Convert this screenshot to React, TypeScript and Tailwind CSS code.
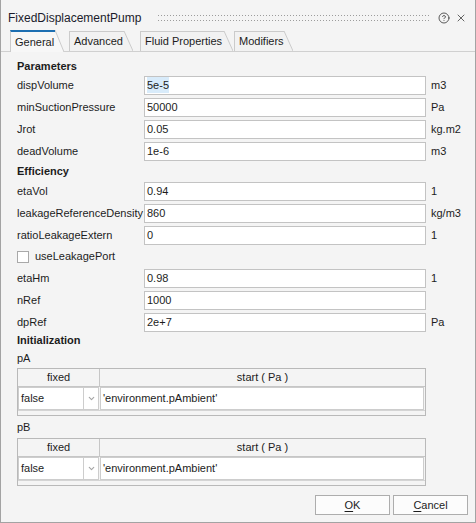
import { CircleHelp, X, ChevronDown } from "lucide-react";

type Field = { label: string; value: string; unit?: string };

const parameters: Field[] = [
  { label: "dispVolume", value: "5e-5", unit: "m3" },
  { label: "minSuctionPressure", value: "50000", unit: "Pa" },
  { label: "Jrot", value: "0.05", unit: "kg.m2" },
  { label: "deadVolume", value: "1e-6", unit: "m3" },
];

const efficiency: Field[] = [
  { label: "etaVol", value: "0.94", unit: "1" },
  { label: "leakageReferenceDensity", value: "860", unit: "kg/m3" },
  { label: "ratioLeakageExtern", value: "0", unit: "1" },
];

const efficiency2: Field[] = [
  { label: "etaHm", value: "0.98", unit: "1" },
  { label: "nRef", value: "1000" },
  { label: "dpRef", value: "2e+7", unit: "Pa" },
];

function Row({ field, selected }: { field: Field; selected?: boolean }) {
  return (
    <div className="flex h-[22px] items-center">
      <span className="w-[127px] whitespace-nowrap">{field.label}</span>
      <div className="flex h-[19px] w-[282px] items-center border border-[#c3c3c3] bg-white pl-[2px]">
        <span className={selected ? "bg-[#d8ebfa]" : ""}>{field.value}</span>
      </div>
      <span className="ml-[5px]">{field.unit}</span>
    </div>
  );
}

function Tab({ label, box, active, className = "" }: { label: string; box: string; active?: boolean; className?: string }) {
  const bg = active ? "#f7f7f7" : "#f2f2f2";
  return (
    <div className={`flex ${active ? "relative z-10 -mb-px h-[22px]" : "h-[20px]"} ${className}`}>
      <div
        className={`flex items-center whitespace-nowrap pl-[4px] border-l border-[#cbcbcb] ${box} ${
          active ? "border-t-2 border-t-[#1d6fb2] bg-[#f7f7f7]" : "border-t bg-[#f2f2f2]"
        }`}
      >
        {label}
      </div>
      <svg className={`w-[9px] ${active ? "h-[22px]" : "h-[20px]"}`} viewBox="0 0 9 20" preserveAspectRatio="none">
        <path d="M0 0 L9 20 L0 20 Z" fill={bg} />
        <line x1="0" y1="0" x2="9" y2="20" stroke="#cbcbcb" strokeWidth="1" vectorEffect="non-scaling-stroke" />
      </svg>
    </div>
  );
}

function InitTable() {
  return (
    <div className="w-[409px] border border-[#b9b9b9]">
      <div className="flex h-[18px] border-b border-[#c6c6c6]">
        <div className="flex w-[82px] items-center justify-center border-r border-[#c6c6c6]">fixed</div>
        <div className="flex flex-1 items-center justify-center">start ( Pa )</div>
      </div>
      <div className="flex h-[23px]">
        <div className="flex w-[66px] items-center border border-[#cdcdcd] bg-white pl-[2px]">false</div>
        <div className="flex w-[15px] items-center justify-center border-y border-r border-[#cdcdcd] bg-white">
          <ChevronDown size={9} strokeWidth={3} className="text-[#a5a5a5]" />
        </div>
        <div className="ml-px mr-px flex flex-1 items-center border border-[#cdcdcd] bg-white pl-[2px]">
          'environment.pAmbient'
        </div>
      </div>
      <div className="h-[5px] border-t border-[#d4d4d4]" />
    </div>
  );
}

export default function App() {
  return (
    <div className="flex h-[523px] w-[476px] flex-col border-x border-b border-[#a3a3a3] bg-[#f4f4f4] font-['Liberation_Sans',Arial,sans-serif] text-[11px] text-[#1c1c1c]">
      {/* title bar */}
      <div className="flex h-[31px] items-center pl-[7px] pr-[8px] pt-[5px]">
        <span className="text-[12px] text-[#1b1b2b]">FixedDisplacementPump</span>
        <div className="ml-[15px] h-[6px] flex-1 bg-[linear-gradient(90deg,#f4f4f4_2px,transparent_2px),linear-gradient(#9c9c9c_1px,transparent_1px)] bg-[length:3px_100%,100%_5px]" />
        <CircleHelp size={12} strokeWidth={1.6} className="ml-[7px] text-[#333]" />
        <X size={12} strokeWidth={1.5} className="ml-[5px] text-[#333]" />
      </div>

      {/* tabs */}
      <div className="flex h-[21px] items-end border-b border-[#d0d0d0] pl-[9px]">
        <Tab label="General" box="w-[45px]" active />
        <Tab label="Advanced" box="w-[55px]" className="ml-[5px]" />
        <Tab label="Fluid Properties" box="w-[84px]" className="ml-[7px]" />
        <Tab label="Modifiers" box="w-[50px]" className="ml-px" />
      </div>

      {/* general page */}
      <div className="flex flex-col pl-[16px] pt-[6px]">
        <div className="flex h-[16px] items-center font-bold">Parameters</div>
        {parameters.map((f, i) => (
          <Row key={f.label} field={f} selected={i === 0} />
        ))}
        <div className="flex h-[18px] items-center font-bold">Efficiency</div>
        {efficiency.map(f => (
          <Row key={f.label} field={f} />
        ))}
        <div className="flex h-[21px] items-center">
          <div className="h-[12px] w-[12px] border border-[#a9a9a9] bg-white" />
          <span className="ml-[6px]">useLeakagePort</span>
        </div>
        {efficiency2.map(f => (
          <Row key={f.label} field={f} />
        ))}
        <div className="flex h-[15px] items-center font-bold">Initialization</div>
        <div className="flex h-[20px] items-center">pA</div>
        <InitTable />
        <div className="flex h-[22px] items-center">pB</div>
        <InitTable />
      </div>

      {/* buttons */}
      <div className="mt-[9px] flex justify-end gap-[3px] pr-[7px]">
        <button className="flex h-[20px] w-[75px] items-center justify-center border border-[#adadad] bg-[#fcfcfc]">
          <span className="underline underline-offset-2">O</span>K
        </button>
        <button className="flex h-[20px] w-[75px] items-center justify-center border border-[#adadad] bg-[#fcfcfc]">
          <span className="underline underline-offset-2">C</span>ancel
        </button>
      </div>
    </div>
  );
}
